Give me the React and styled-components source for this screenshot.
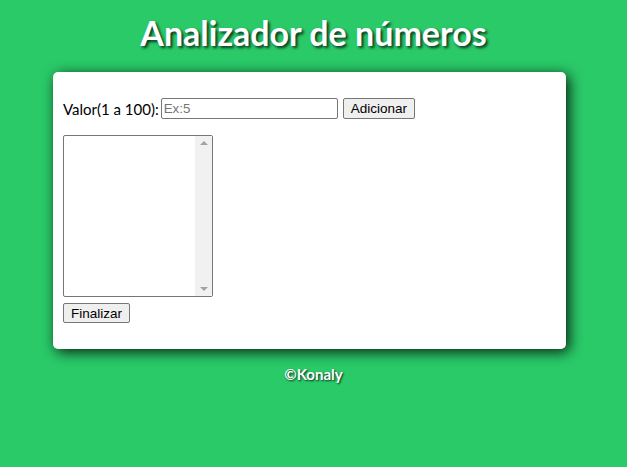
import React from "react";
import styled, { createGlobalStyle } from "styled-components";

const Global = createGlobalStyle`
  html, body {
    margin: 0;
    background: #2aca69;
    font-family: "Gill Sans", "Lato", "Liberation Sans", sans-serif;
  }
  body {
    padding: 8px;
  }
`;

const Titulo = styled.h1`
  margin: 4px 0 0;
  height: 60px;
  color: white;
  text-align: center;
  font-size: 34px;
  line-height: 42px;
  font-weight: 700;
  text-shadow: 2px 2px 3px rgba(0, 0, 0, 0.75);
`;

const Cartao = styled.section`
  box-sizing: border-box;
  width: 513px;
  margin-left: 45px;
  padding: 10px;
  background: white;
  border-radius: 5px;
  box-shadow: 3px 3px 14px rgba(0, 0, 0, 0.85);
`;

const Linha = styled.p`
  margin: 16px 0;
  display: flex;
  align-items: center;
  font-size: 15px;
  color: black;
`;

const Rotulo = styled.label`
  margin-right: 2px;
`;

const Campo = styled.input`
  box-sizing: border-box;
  width: 177px;
  height: 21px;
  padding: 1px 2px;
  font: 13.33px "Liberation Sans", Arial, sans-serif;
  border: 1px solid #767676;
  border-radius: 2px;
  &::placeholder {
    color: #757575;
  }
`;

const Botao = styled.button`
  box-sizing: border-box;
  height: ${(p) => p.$h || 21}px;
  margin-left: ${(p) => p.$ml || 0}px;
  padding: 1px 7px;
  font: 13.5px "Liberation Sans", Arial, sans-serif;
  color: black;
  background: #efefef;
  border: 1px solid #767676;
  border-radius: 2px;
`;

const Lista = styled.div`
  box-sizing: border-box;
  width: 150px;
  height: 162px;
  border: 1px solid #767676;
  border-radius: 2px;
  display: flex;
  justify-content: flex-end;
`;

const Trilho = styled.div`
  width: 17px;
  background: #f1f1f1;
  display: flex;
  flex-direction: column;
  justify-content: space-between;
  align-items: center;
  padding: 5px 0;
`;

const Seta = styled.div`
  width: 0;
  height: 0;
  border-left: 4px solid transparent;
  border-right: 4px solid transparent;
  ${(p) =>
    p.$baixo
      ? "border-top: 4px solid #a3a3a3;"
      : "border-bottom: 4px solid #a3a3a3;"}
`;

const Rodape = styled.p`
  margin: 0;
  padding-top: 16px;
  text-align: center;
  color: white;
  font-weight: 700;
  font-size: 15px;
  text-shadow: 1px 1px 2px rgba(0, 0, 0, 0.8);
`;

const Bloco = styled.div`
  margin: 16px 0;
  display: flex;
  flex-direction: column;
  align-items: flex-start;
  gap: 6px;
`;

export default function App() {
  return (
    <>
      <Global />
      <Titulo>Analizador de números</Titulo>
      <Cartao>
        <Linha>
          <Rotulo>Valor(1 a 100):</Rotulo>
          <Campo placeholder="Ex:5" />
          <Botao $ml={5}>Adicionar</Botao>
        </Linha>
        <Bloco>
          <Lista>
            <Trilho>
              <Seta />
              <Seta $baixo />
            </Trilho>
          </Lista>
          <Botao $h={20}>Finalizar</Botao>
        </Bloco>
      </Cartao>
      <Rodape>©Konaly</Rodape>
    </>
  );
}
